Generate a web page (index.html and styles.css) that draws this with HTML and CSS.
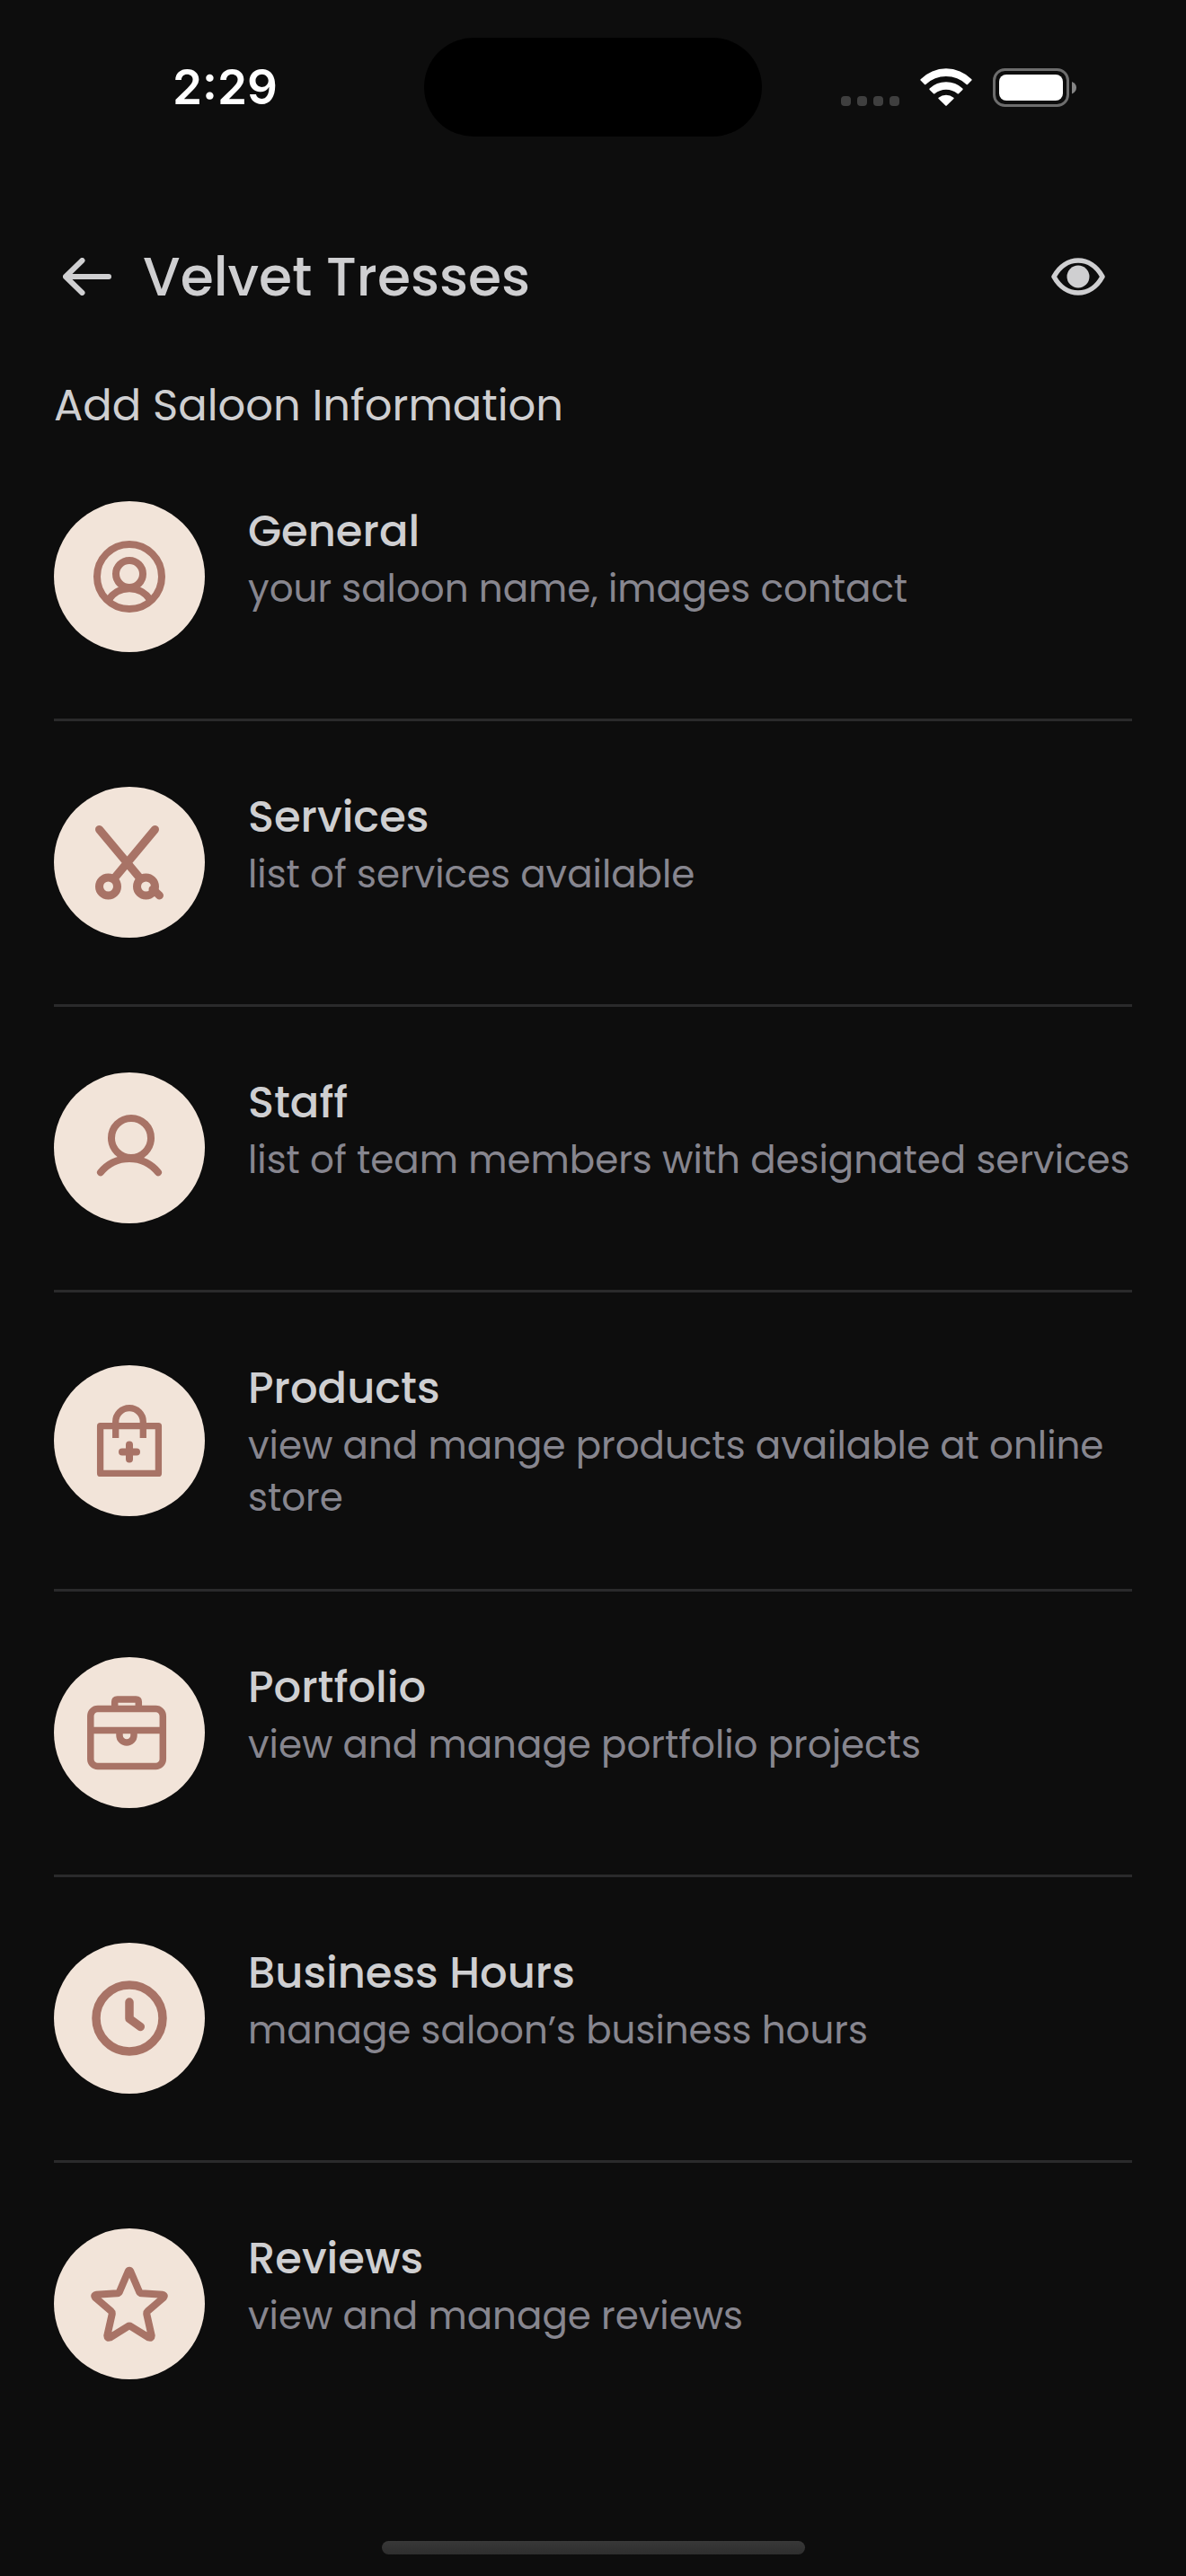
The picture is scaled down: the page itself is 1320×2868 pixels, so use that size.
FILE: index.html
```html
<!DOCTYPE html>
<html lang="en">
<head>
<meta charset="utf-8">
<meta name="viewport" content="width=device-width, initial-scale=1">
<title>Velvet Tresses</title>
<link rel="stylesheet" href="styles.css">
</head>
<body>
<div class="screen">
  <div class="status">
    <time class="status-time">2:29</time>
    <div class="island"></div>
    <div class="status-icons">
      <svg class="signal" viewBox="0 0 65 42" fill="#3f3f3f" aria-hidden="true"><rect y="31" width="11" height="11" rx="4"/><rect x="18" y="31" width="11" height="11" rx="4"/><rect x="36" y="31" width="11" height="11" rx="4"/><rect x="54" y="31" width="11" height="11" rx="4"/></svg>
      <svg class="wifi" viewBox="0 0 58 42" fill="#fff" aria-hidden="true"><path d="M.6 12.2A40 40 0 0 1 57.4 12.2Q58 13 57.4 13.600L53 18Q52.400 18.600 51.600 18A33 33 0 0 0 6.400 18Q5.600 18.600 5 18L.6 13.600Q0 13 .6 12.200Z"/><path d="M10.600 22.600A26.500 26.500 0 0 1 47.400 22.600Q48 23.300 47.400 24L43 28.300Q42.300 28.800 41.600 28.300A19.500 19.500 0 0 0 16.400 28.300Q15.700 28.800 15 28.300L10.600 24Q10 23.300 10.600 22.600Z"/><path d="M20.600 32.800A13.500 13.500 0 0 1 37.400 32.800Q38 33.500 37.400 34.100L29.700 41.600Q29 42.200 28.300 41.600L20.600 34.100Q20 33.500 20.600 32.800Z"/></svg>
      <svg class="battery" viewBox="0 0 93 43" aria-hidden="true"><rect x="1.500" y="1.500" width="82" height="40" rx="12" fill="none" stroke="#6d6d6d" stroke-width="3"/><rect x="7" y="7" width="71" height="29" rx="8" fill="#fff"/><path d="M88 15Q93 17 93 21.500T88 28.500Z" fill="#858585"/></svg>
    </div>
  </div>

  <header class="header">
    <button class="icon-button" type="button" aria-label="Back">
      <svg class="arrow" viewBox="0 0 54 42" fill="none" stroke="#cfcfd1" stroke-width="6" stroke-linecap="round" stroke-linejoin="round"><path d="M51 21H3M21.500 3L3 21L21.500 39"/></svg>
    </button>
    <h1 class="title">Velvet Tresses</h1>
    <button class="icon-button" type="button" aria-label="Preview">
      <svg class="eye" viewBox="0 0 60 42" fill="none" stroke="#cfcfd1" stroke-width="5.500" stroke-linejoin="round"><path d="M3 21C16 -3 44 -3 57 21C44 45 16 45 3 21Z"/><circle cx="30" cy="21" r="12.500" fill="#cfcfd1" stroke="none"/></svg>
    </button>
  </header>

  <main class="main">
    <h2 class="subtitle">Add Saloon Information</h2>
    <ul class="list">
      <li class="item"><a class="row" href="#general">
        <svg class="badge" viewBox="0 0 168 168" stroke-width="8" aria-hidden="true"><circle cx="84" cy="84" r="36"/><circle cx="84" cy="81" r="15"/><path d="M60.500 110A28 28 0 0 1 107.500 110"/></svg>
        <span class="text"><span class="name">General</span><span class="desc">your saloon name, images contact</span></span>
      </a></li>
      <li class="item"><a class="row" href="#services">
        <svg class="badge" viewBox="0 0 168 168" stroke-width="9" aria-hidden="true"><path d="M50.500 47.500L96 102M112.500 47.500L67.500 101.500M110 114L117.500 121"/><circle cx="60.500" cy="111" r="10"/><circle cx="102.500" cy="111" r="10"/></svg>
        <span class="text"><span class="name">Services</span><span class="desc">list of services available</span></span>
      </a></li>
      <li class="item"><a class="row" href="#staff">
        <svg class="badge" viewBox="0 0 168 168" stroke-width="8" aria-hidden="true"><circle cx="86" cy="73" r="22"/><path d="M52 111.300A41 41 0 0 1 116 111.300"/></svg>
        <span class="text"><span class="name">Staff</span><span class="desc">list of team members with designated services</span></span>
      </a></li>
      <li class="item"><a class="row" href="#products">
        <svg class="badge" viewBox="0 0 168 168" stroke-width="7.300" aria-hidden="true"><path d="M51.600 67.600H116.400V120.400H51.600Z"/><path stroke-linecap="butt" d="M68.700 81V63A15.300 15.300 0 0 1 99.300 63V81"/><path stroke-width="8" d="M76 96.500H92M84 88.500V104.500"/></svg>
        <span class="text"><span class="name">Products</span><span class="desc">view and mange products available at online store</span></span>
      </a></li>
      <li class="item"><a class="row" href="#portfolio">
        <svg class="badge" viewBox="0 0 168 168" stroke-width="7.500" aria-hidden="true"><rect x="40.800" y="57.500" width="80.500" height="64" rx="8"/><path stroke-linecap="butt" d="M67.700 57V50Q67.700 47 70.700 47H91.300Q94.300 47 94.300 50V57M41 81.500H121M73 81.500V87A8 8 0 0 0 89 87V81.500"/></svg>
        <span class="text"><span class="name">Portfolio</span><span class="desc">view and manage portfolio projects</span></span>
      </a></li>
      <li class="item"><a class="row" href="#hours">
        <svg class="badge" viewBox="0 0 168 168" stroke-width="9.500" aria-hidden="true"><circle cx="84" cy="84" r="37"/><path d="M84 66V84.500L96.300 93.500"/></svg>
        <span class="text"><span class="name">Business Hours</span><span class="desc">manage saloon’s business hours</span></span>
      </a></li>
      <li class="item"><a class="row" href="#reviews">
        <svg class="badge" viewBox="0 0 168 168" stroke-width="8" aria-hidden="true"><path d="M82.600 48Q84 45.500 85.400 48L95 70.500Q95.800 72 97.500 72.200L121 73.800Q124 74.500 122 77L104.500 92Q103 93.300 103.300 95.500L108.700 119.500Q108.700 122.500 105.500 121.500L86 109.300Q84 108 82 109.300L62.500 121.500Q59.300 122.500 59.300 119.500L64.700 95.500Q65 93.300 63.500 92L46 77Q44 74.500 47 73.800L70.500 72.200Q72.200 72 73 70.500Z"/></svg>
        <span class="text"><span class="name">Reviews</span><span class="desc">view and manage reviews</span></span>
      </a></li>
    </ul>
  </main>
  <div class="home-indicator"></div>
</div>
</body>
</html>
```
FILE: styles.css
```css
* {
  box-sizing: border-box;
}

body {
  margin: 0;
  background: #0d0d0d;
  color: #cfcfd1;
  font-family: Poppins, Inter, sans-serif;
}

svg {
  display: block;
  flex: none;
}

.screen {
  display: flex;
  flex-direction: column;
  min-height: 100vh;
}

/* Status bar */
.status {
  display: grid;
  grid-template-columns: 1fr auto 1fr;
  align-items: center;
  padding: 42px 0;
}

.status-time {
  padding-left: 192px;
  color: #fff;
  font-family: Inter, sans-serif;
  font-size: 53px;
  font-weight: 600;
  line-height: 64px;
}

.island {
  width: 376px;
  height: 110px;
  border-radius: 55px;
  background: #000;
}

.status-icons {
  display: flex;
  align-items: center;
  justify-content: flex-end;
  gap: 23px;
  padding-right: 122px;
}

.signal {
  width: 65px;
  height: 42px;
}

.wifi {
  width: 58px;
  height: 42px;
}

.battery {
  width: 93px;
  height: 43px;
}

/* Header */
.header {
  display: flex;
  align-items: center;
  padding: 72px 78px 0 58px;
}

.icon-button {
  display: flex;
  padding: 12px;
  border: 0;
  background: none;
}

.arrow {
  width: 54px;
  height: 42px;
}

.eye {
  width: 60px;
  height: 42px;
}

.title {
  flex: 1;
  margin: 0;
  padding-left: 23px;
  font-size: 60px;
  font-weight: 500;
  line-height: 84px;
}

/* Menu */
.main {
  padding: 66px 60px 0;
}

.subtitle {
  margin: 0;
  font-size: 48px;
  font-weight: 400;
  line-height: 72px;
}

.list {
  margin: 0;
  padding: 0;
  list-style: none;
}

.item + .item {
  border-top: 3px solid #2a2a2b;
}

.row {
  display: flex;
  align-items: center;
  gap: 48px;
  padding: 73px 0 74px;
  color: inherit;
  text-decoration: none;
}

.item:first-child .row {
  padding-top: 70px;
}

.badge {
  width: 168px;
  height: 168px;
  border-radius: 50%;
  background: #f2e4d9;
  fill: none;
  stroke: #a87366;
  stroke-linecap: round;
  stroke-linejoin: round;
}

.text {
  display: flex;
  flex: 1;
  flex-direction: column;
  align-self: flex-start;
  gap: 2px;
  margin-bottom: -2px;
}

.name {
  font-size: 48px;
  font-weight: 500;
  line-height: 67px;
}

.desc {
  color: #87868f;
  font-size: 42px;
  line-height: 58px;
}

.home-indicator {
  width: 471px;
  height: 15px;
  margin: auto auto 24px;
  border-radius: 8px;
  background: linear-gradient(#383838, #2e2e2e);
}
```
